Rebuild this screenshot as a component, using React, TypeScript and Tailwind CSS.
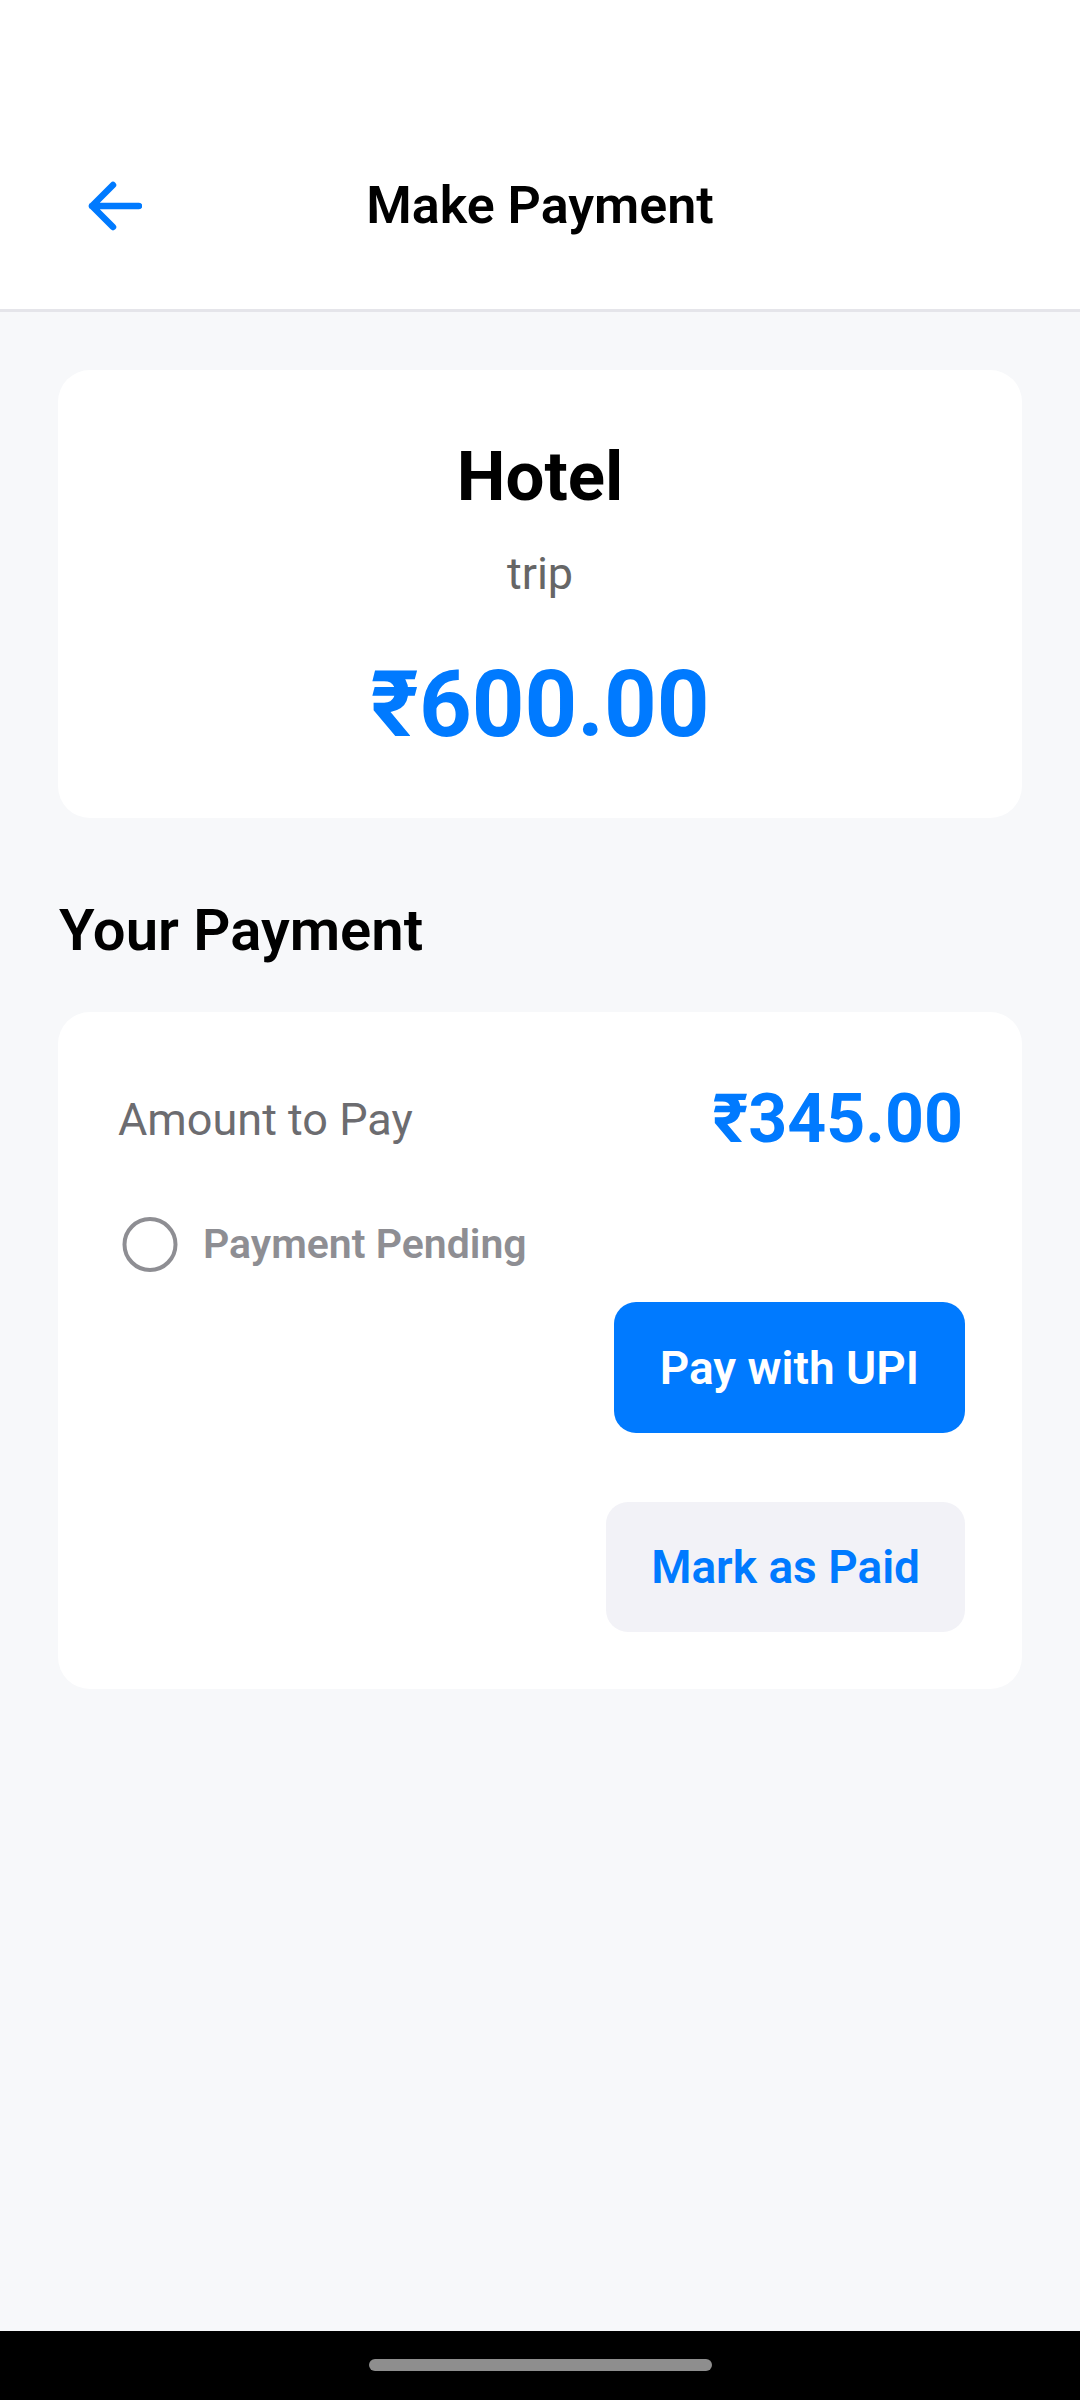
import React from "react";

const BLUE = "#007AFF";

function BackArrow() {
  return (
    <svg width="56" height="52" viewBox="0 0 56 52" fill="none">
      <path d="M6 26H53M27 5L6 26L27 47" stroke={BLUE} strokeWidth="6.5" strokeLinecap="round" strokeLinejoin="round" />
    </svg>
  );
}

function RadioOff() {
  return (
    <svg width="63" height="63" viewBox="0 0 63 63" fill="none">
      <circle cx="32" cy="31.5" r="25.5" stroke="#8e8e93" strokeWidth="4" />
    </svg>
  );
}

export default function App() {
  return (
    <div
      className="w-[1080px] h-[2400px] flex flex-col bg-[#f7f8fa]"
      style={{ fontFamily: "Roboto, 'Noto Sans', 'DejaVu Sans', sans-serif" }}
    >
      {/* top bar */}
      <header className="h-[312px] shrink-0 bg-white border-b-[3px] border-[#e5e5ea] pt-[180px]">
        <div className="grid grid-cols-[1fr_auto_1fr] items-center h-[52px]">
          <div className="pl-[86px] flex items-center">
            <BackArrow />
          </div>
          <h1 className="text-[52px] leading-none font-semibold text-black">Make Payment</h1>
          <div />
        </div>
      </header>

      <main className="flex-1 px-[58px] pt-[58px]">
        {/* expense summary */}
        <section className="rounded-[32px] bg-white pt-[72px] pb-[67px] flex flex-col items-center">
          <div className="text-[69px] leading-none font-bold text-black">Hotel</div>
          <div className="mt-[40px] text-[45px] leading-none text-[#666666]">trip</div>
          <div className="mt-[63px] text-[92px] leading-none font-bold text-[#007AFF]">₹600.00</div>
        </section>

        <h2 className="mt-[83px] pl-[1px] text-[58px] leading-none font-semibold text-black">Your Payment</h2>

        <section className="mt-[53px] rounded-[32px] bg-white pl-[60px] pr-[57px] pt-[73px] pb-[57px]">
          <div className="flex items-center justify-between">
            <span className="text-[45px] leading-none text-[#6c6c70]">Amount to Pay</span>
            <span className="mr-[2px] text-[68px] leading-none font-bold text-[#007AFF]">₹345.00</span>
          </div>

          <div className="mt-[60px] flex items-center">
            <RadioOff />
            <span className="ml-[22px] text-[41px] leading-none font-semibold text-[#8e8e93]">Payment Pending</span>
          </div>

          <div className="flex flex-col items-end">
            <button className="mt-[26px] h-[131px] px-[46px] rounded-[22px] bg-[#007AFF] text-white text-[46px] leading-none font-semibold">
              Pay with UPI
            </button>
            <button className="mt-[69px] h-[130px] px-[45px] rounded-[22px] bg-[#f2f2f7] text-[#007AFF] text-[46px] leading-none font-semibold">
              Mark as Paid
            </button>
          </div>
        </section>
      </main>

      {/* gesture bar */}
      <div className="h-[69px] shrink-0 bg-black flex justify-center pt-[28px]">
        <div className="w-[343px] h-[12px] rounded-full bg-[#8e8e8e]" />
      </div>
    </div>
  );
}
